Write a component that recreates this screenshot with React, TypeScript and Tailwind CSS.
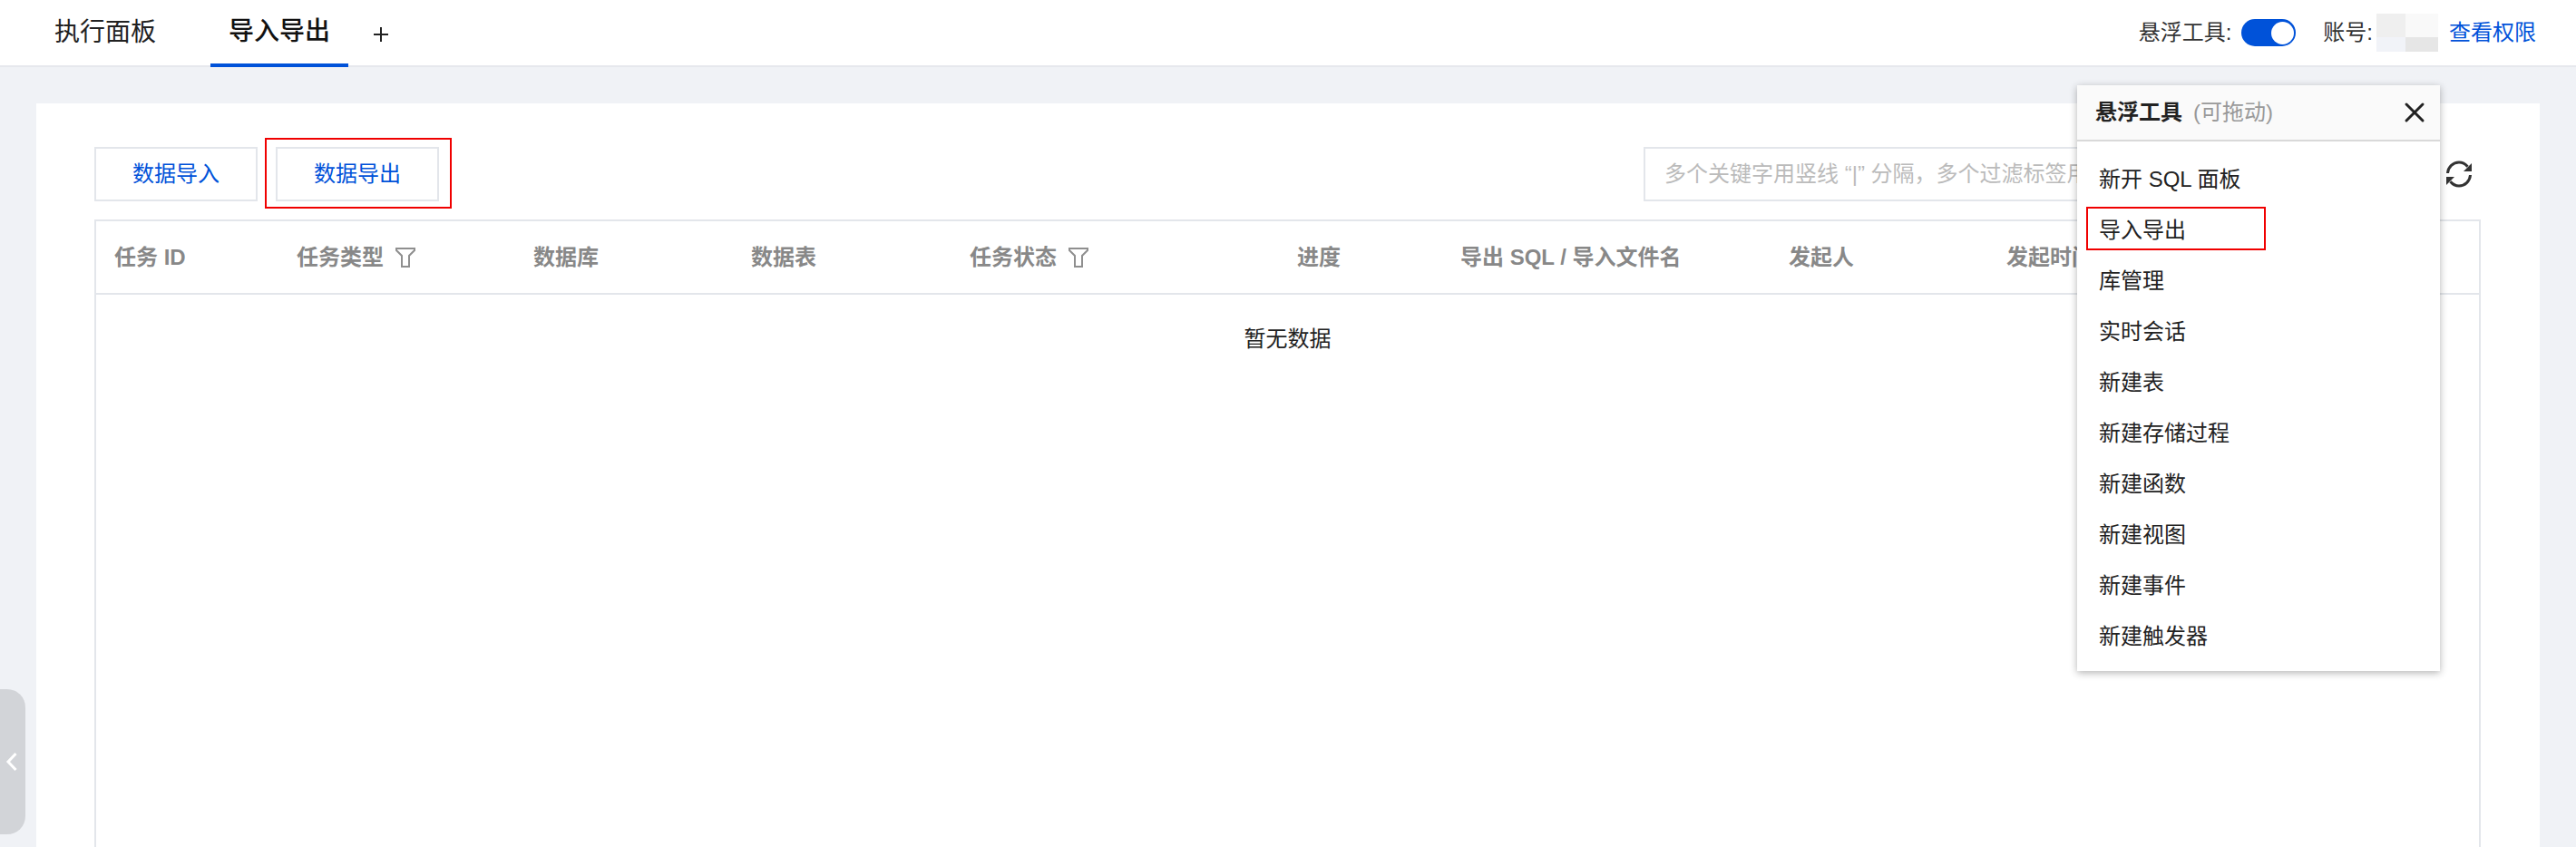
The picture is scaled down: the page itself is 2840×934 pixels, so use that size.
import { X } from 'lucide-react';

const FONT = "font-['Liberation_Sans','Noto_Sans_CJK_SC',sans-serif]";

// 表头：extra 是该列的额外样式
const columns: { label: string; filter?: boolean; extra?: string }[] = [
  { label: '任务 ID' },
  { label: '任务类型', filter: true },
  { label: '数据库' },
  { label: '数据表' },
  { label: '任务状态', filter: true },
  { label: '进度', extra: 'justify-end' },
  { label: '导出 SQL / 导入文件名', extra: 'pl-[112px]' },
  { label: '发起人' },
  { label: '发起时间' },
];

const toolItems = ['新开 SQL 面板', '导入导出', '库管理', '实时会话', '新建表', '新建存储过程', '新建函数', '新建视图', '新建事件', '新建触发器'];

function FilterIcon() {
  return (
    <svg width="24" height="24" viewBox="0 0 24 24" fill="none" stroke="#8f8f8f" strokeWidth="2" className="ml-3 shrink-0">
      <path d="M2 2h20v2l-6 6v12H8V10L2 4z" />
    </svg>
  );
}

function RefreshIcon() {
  return (
    <svg width="30" height="30" viewBox="0 0 30 30" fill="none" stroke="#333333" strokeWidth="3">
      <path d="M2.500 14C3 7 8.500 2 15 2c3.700 0 7 1.700 9.500 4.700" />
      <path d="M27.500 16C27 23 21.500 28 15 28c-3.700 0-7-1.700-9.500-4.700" />
      <path d="M29 3v9h-9z" fill="#333333" stroke="none" />
      <path d="M1 27v-9h9z" fill="#333333" stroke="none" />
    </svg>
  );
}

function FloatingTools() {
  return (
    <div className="absolute left-[2290px] top-[94px] w-[400px] h-[646px] bg-white shadow-[0_2px_8px_rgba(0,0,0,0.3)]">
      <div className="h-[62px] bg-[#fafafa] border-b-2 border-[#d9d9d9] flex items-center pl-[20px] pr-[10px]">
        <span className="text-[24px] font-bold text-[#222]">悬浮工具</span>
        <span className="text-[24px] text-[#999] ml-3">(可拖动)</span>
        <X size={36} strokeWidth={2} className="ml-auto text-[#222]" />
      </div>
      <ul className="pt-[13px]">
        {toolItems.map((item) => (
          <li key={item} className="relative h-[56px] flex items-center pl-[24px] pt-[2px] text-[24px] text-[#222]">
            {item}
            {item === '导入导出' && (
              <span className="absolute left-[10px] top-[3px] w-[198px] h-[48px] border-2 border-[#f00000]" />
            )}
          </li>
        ))}
      </ul>
    </div>
  );
}

export default function App() {
  return (
    <div className={`${FONT} relative h-screen overflow-hidden bg-[#f0f2f6] flex flex-col`}>
      {/* 顶部标签栏 */}
      <header className="h-[74px] shrink-0 bg-white border-b-2 border-[#e6e8ed] flex items-stretch pl-[60px] pr-[44px]">
        <div className="w-[172px] flex items-center text-[28px] text-[#222]">执行面板</div>
        <div className="w-[152px] h-[74px] border-b-4 border-[#0052d9] flex items-center justify-center text-[28px] font-medium text-[#111]">
          导入导出
        </div>
        <div className="ml-[28px] flex items-center pt-[3px]">
          <svg width="16" height="16" viewBox="0 0 16 16" fill="none" stroke="#222222" strokeWidth="2">
            <path d="M8 0v16M0 8h16" />
          </svg>
        </div>

        <div className="ml-auto flex items-center text-[24px] text-[#333]">
          <span>悬浮工具:</span>
          <div className="ml-[11px] w-[60px] h-[30px] rounded-full bg-[#0052d9] flex items-center justify-end pr-[2px]">
            <div className="w-[25px] h-[25px] rounded-full bg-white" />
          </div>
          <span className="ml-[30px]">账号:</span>
          <div className="ml-[4px] w-[68px] h-[42px] grid grid-cols-[32px_36px] grid-rows-[26px_16px]">
            <div className="bg-[#efefef]" />
            <div className="bg-[#f9f9f9]" />
            <div className="bg-[#f1f3f8]" />
            <div className="bg-[#e6e6e6]" />
          </div>
          <a className="ml-[12px] text-[#0052d9]">查看权限</a>
        </div>
      </header>

      {/* 主体卡片 */}
      <main className="flex-1 min-h-0 pt-[40px] px-[40px]">
        <div className="bg-white h-full pt-[48px] pl-[64px] pr-[65px] flex flex-col">
          <div className="h-[60px] flex items-stretch shrink-0">
            <button type="button" className="w-[180px] border-2 border-[#e3e6eb] text-[24px] text-[#0052d9]">数据导入</button>
            <div className="relative ml-[20px] w-[180px]">
              <button type="button" className="w-full h-full border-2 border-[#e3e6eb] text-[24px] text-[#0052d9]">数据导出</button>
              <span className="absolute -left-[12px] -right-[14px] -top-[10px] -bottom-[8px] border-2 border-[#f00000]" />
            </div>
            <div className="ml-auto w-[868px] mr-[55px] border-2 border-[#e3e6eb] flex items-center pl-[21px] text-[24px] text-[#bbbbbb] whitespace-nowrap overflow-hidden">
              多个关键字用竖线 “|” 分隔，多个过滤标签用回车键分隔
            </div>
          </div>
          <div className="absolute left-[2696px] top-[177px]">
            <RefreshIcon />
          </div>

          {/* 任务表格 */}
          <div className="mt-[20px] flex-1 border-x-2 border-t-2 border-[#e3e6eb]">
            <div className="h-[81px] border-b-2 border-[#e3e6eb] grid grid-cols-[201px_261px_240px_241px_240px_209px_454px_240px_1fr] items-center text-[24px] font-bold text-[#888888]">
              {columns.map((col) => (
                <div key={col.label} className={`flex items-center px-[20px] whitespace-nowrap overflow-hidden ${col.extra ?? ''}`}>
                  {col.label}
                  {col.filter && <FilterIcon />}
                </div>
              ))}
            </div>
            <div className="h-[98px] flex items-center justify-center text-[24px] text-[#222]">暂无数据</div>
          </div>
        </div>
      </main>

      <FloatingTools />

      {/* 左侧收起把手 */}
      <div className="absolute left-0 top-[760px] w-[28px] h-[160px] bg-[#d2d4d8] rounded-r-[20px] flex items-center justify-end pr-[8px]">
        <svg width="14" height="22" viewBox="0 0 14 22" fill="none" stroke="#ffffff" strokeWidth="3">
          <path d="M11.500 2 3 11l8.500 9" />
        </svg>
      </div>
    </div>
  );
}
